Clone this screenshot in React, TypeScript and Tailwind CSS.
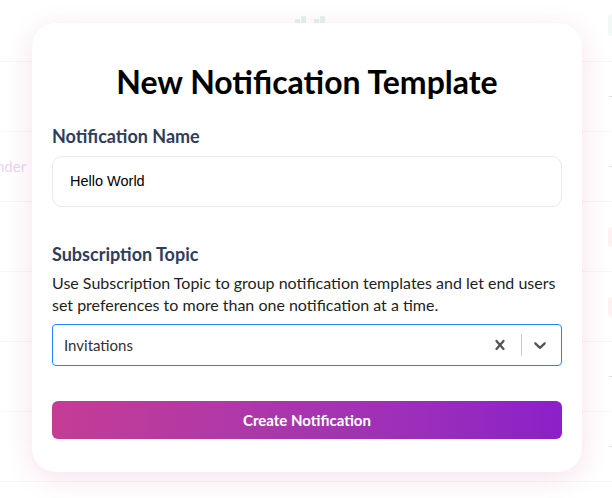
import React from 'react';

const rows = [1, 2, 3, 4, 5, 6];

const BackgroundTable: React.FC = () => (
    <div className="flex flex-col">
        <div className="h-[62px] border-b border-[#f1f1f4] flex items-start justify-center relative pt-[16px]">
            <div className="flex gap-[8px] opacity-40 ml-[8px]">
                <span className="flex items-end gap-[1px]">
                    <span className="w-[5px] h-[4px] bg-[#7cc8e8]" />
                    <span className="w-[5px] h-[7px] bg-[#8fd6b4]" />
                </span>
                <span className="flex items-end gap-[1px]">
                    <span className="w-[5px] h-[4px] bg-[#7cc8e8]" />
                    <span className="w-[5px] h-[7px] bg-[#8fd6b4]" />
                </span>
            </div>
            <span className="absolute right-[-8px] top-[14px] w-[12px] h-[22px] rounded bg-[#e6f6ef]" />
        </div>
        {rows.map(i => (
            <div key={i} className="h-[70px] border-b border-[#f1f1f4] flex items-center justify-between">
                {i === 2 ? (
                    <span className="text-[15px] text-[#d9b8f0] -ml-[4px]">nder</span>
                ) : <span />}
                {i === 3 || i === 4 ? (
                    <span className="w-[4px] h-[20px] rounded-l bg-[#fde8ea]" />
                ) : (
                    <span className="w-[3px] h-[1px] bg-[#c8c8d0]" />
                )}
            </div>
        ))}
    </div>
);

const App: React.FC = () => {
    return (
        <div className="relative w-[612px] h-[498px] overflow-hidden bg-white" style={{ fontFamily: 'Lato, "Noto Sans", sans-serif' }}>
            <BackgroundTable />
            <div className="absolute inset-0 bg-white/40" />
            <div className="absolute left-[32px] top-[23px] w-[550px] h-[449px] bg-white rounded-[24px] shadow-[0_6px_28px_rgba(190,40,120,0.14)] px-[20px] pt-[39px]">
                <h1 className="text-center text-[32px] font-bold text-black leading-[40px]">New Notification Template</h1>
                <div className="mt-[22px]">
                    <label className="block text-[18px] font-bold text-[#2f3d5c] leading-[24px]">Notification Name</label>
                    <div className="mt-[8px] h-[51px] rounded-[10px] border border-[#e9e9ee] flex items-center px-[17px]">
                        <span className="text-[14.5px] text-black" style={{ fontFamily: '"Liberation Sans", Arial, sans-serif' }}>Hello World</span>
                    </div>
                </div>
                <div className="mt-[35px]">
                    <label className="block text-[18px] font-bold text-[#2f3d5c] leading-[24px]">Subscription Topic</label>
                    <p className="mt-[6px] text-[16px] text-[#1e1e24] leading-[22px]">
                        Use Subscription Topic to group notification templates and let end users set preferences to more than one notification at a time.
                    </p>
                    <div className="mt-[8px] h-[42px] rounded-[4px] border border-[#2684ff] flex items-center pl-[11px]">
                        <span className="flex-1 text-[15px] text-[#333333]">Invitations</span>
                        <div className="flex items-center h-full">
                            <svg width="20" height="20" viewBox="0 0 20 20" className="mr-[11px] text-[#555]" fill="currentColor">
                                <path d="M14.348 14.849c-0.469 0.469-1.229 0.469-1.697 0l-2.651-3.030-2.651 3.029c-0.469 0.469-1.229 0.469-1.697 0-0.469-0.469-0.469-1.229 0-1.697l2.758-3.15-2.759-3.152c-0.469-0.469-0.469-1.228 0-1.697s1.228-0.469 1.697 0l2.652 3.031 2.651-3.031c0.469-0.469 1.228-0.469 1.697 0s0.469 1.229 0 1.697l-2.758 3.152 2.758 3.15c0.469 0.469 0.469 1.229 0 1.698z" />
                            </svg>
                            <span className="w-px h-[22px] bg-[#cccccc]" />
                            <svg width="20" height="20" viewBox="0 0 20 20" className="ml-[8px] mr-[11px] text-[#555]" fill="currentColor">
                                <path d="M4.516 7.548c0.436-0.446 1.043-0.481 1.576 0l3.908 3.747 3.908-3.747c0.533-0.481 1.141-0.446 1.574 0 0.436 0.445 0.408 1.197 0 1.615-0.406 0.418-4.695 4.502-4.695 4.502-0.217 0.223-0.502 0.335-0.787 0.335s-0.57-0.112-0.789-0.335c0 0-4.287-4.084-4.695-4.502s-0.436-1.17 0-1.615z" />
                            </svg>
                        </div>
                    </div>
                </div>
                <button className="mt-[35px] w-full h-[38px] rounded-[6px] bg-gradient-to-r from-[#c53c94] to-[#8c1fc8] text-white text-[15px] font-bold">
                    Create Notification
                </button>
            </div>
        </div>
    );
};

export default App;
